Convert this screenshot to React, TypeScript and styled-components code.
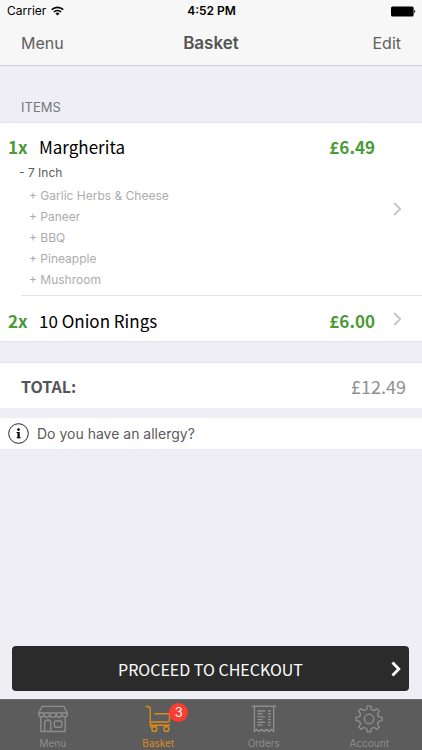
import React from "react";
import styled, { createGlobalStyle } from "styled-components";

const ui = `Inter, "Liberation Sans", sans-serif`;
const brand = `"Noto Sans CJK SC", "Noto Sans", sans-serif`;

const GlobalStyle = createGlobalStyle`
  *, *::before, *::after { box-sizing: border-box; }
  body { margin: 0; background: #efeef4; font-family: ${ui}; color: #000; }
  h1, h2, p, ul { margin: 0; padding: 0; }
  ul { list-style: none; }
  button { border: 0; padding: 0; background: none; font: inherit; color: inherit; text-align: left; cursor: pointer; }
  svg { display: block; flex: none; }
`;

const Screen = styled.div`
  display: flex;
  flex-direction: column;
  min-height: 100vh;
`;

const Header = styled.header`
  background: #f7f7f7;
  border-bottom: 1px solid #cfcfd3;
`;

const StatusBar = styled.div`
  display: grid;
  grid-template-columns: 1fr auto 1fr;
  align-items: center;
  height: 22px;
  padding: 0 6px 0 7px;
  font-size: 12px;
  line-height: 22px;
`;

const Carrier = styled.span`
  display: flex;
  align-items: center;
  gap: 5px;
`;

const Clock = styled.time`
  font-weight: 600;
`;

const BatterySlot = styled.span`
  justify-self: end;
`;

const NavBar = styled.nav`
  display: grid;
  grid-template-columns: 1fr auto 1fr;
  align-items: center;
  height: 43px;
  padding: 0 21px 2px;
  color: #606060;
`;

const NavButton = styled.button<{ $end?: boolean }>`
  justify-self: ${(p) => (p.$end ? "end" : "start")};
  font-size: 16px;
  line-height: 24px;
`;

const Title = styled.h1`
  font-size: 17px;
  font-weight: 600;
  line-height: 24px;
  color: #555;
`;

const SectionTitle = styled.h2`
  padding: 32px 21px 6px;
  font-size: 13px;
  font-weight: 400;
  line-height: 18px;
  color: #77777c;
`;

const Items = styled.ul`
  border-top: 1px solid #e4e4e8;
  border-bottom: 1px solid #e4e4e8;
  background: #fff;
`;

const Item = styled.li`
  & + &::before {
    content: "";
    display: block;
    height: 1px;
    margin-left: 21px;
    background: #e3e3e6;
  }
`;

const ItemButton = styled.button`
  display: flex;
  align-items: center;
  width: 100%;
  min-height: 45px;
  padding: 9px 20px 5px 8px;

  > svg { margin-bottom: 4px; }
`;

const ItemBody = styled.span`
  flex: 1;
  display: block;
`;

const ItemLine = styled.span`
  display: flex;
  align-items: center;
  font-family: ${brand};
  font-size: 17px;
  line-height: 29px;
`;

const Quantity = styled.span`
  width: 31px;
  font-weight: 700;
  color: #4a9a36;
`;

const Name = styled.span`
  flex: 1;
`;

const Price = styled.span`
  margin-right: 18px;
  font-weight: 700;
  color: #4a9a36;
`;

const Option = styled.span<{ $extra?: boolean }>`
  display: block;
  padding-left: ${(p) => (p.$extra ? 21 : 11)}px;
  font-size: 12px;
  line-height: ${(p) => (p.$extra ? 21 : 24)}px;
  color: ${(p) => (p.$extra ? "#acacac" : "#5c5c5c")};
`;

const TotalRow = styled.section`
  display: flex;
  align-items: center;
  justify-content: space-between;
  height: 46px;
  margin-top: 20px;
  padding: 0 16px 0 21px;
  border-top: 1px solid #e4e4e8;
  background: #fff;
  font-family: ${brand};
  line-height: 28px;
`;

const TotalLabel = styled.span`
  font-size: 16px;
  font-weight: 700;
  color: #555;
`;

const TotalValue = styled.span`
  font-size: 18px;
  color: #8e8e93;
`;

const AllergyButton = styled.button`
  display: flex;
  align-items: center;
  gap: 8px;
  height: 31px;
  margin-top: 10px;
  padding: 0 8px;
  background: #fff;
  font-size: 14px;
  line-height: 20px;
  color: #5a5a5a;
`;

const Footer = styled.footer`
  margin-top: auto;
`;

const CheckoutArea = styled.div`
  padding: 20px 13px 8px 12px;
`;

const Checkout = styled.button`
  display: grid;
  grid-template-columns: 1fr auto 1fr;
  align-items: center;
  width: 100%;
  height: 45px;
  padding: 0 8px;
  border-radius: 4px;
  background: #2b2b2b;
  color: #fff;
  font-family: ${brand};
  font-size: 16px;
  line-height: 28px;

  span { grid-column: 2; }
  svg { justify-self: end; }
`;

const TabBar = styled.nav`
  display: grid;
  grid-template-columns: repeat(4, 1fr);
  height: 51px;
  border-top: 1px solid #6c6c6c;
  background: #5c5c5c;
`;

const Tab = styled.button<{ $active?: boolean }>`
  display: flex;
  flex-direction: column;
  align-items: center;
  padding-top: 5px;
  font-size: 10px;
  line-height: 14px;
  color: ${(p) => (p.$active ? "#d98a1f" : "#8d8d8d")};
`;

const TabIcon = styled.span`
  position: relative;
  margin-bottom: 3px;
`;

const Badge = styled.span`
  position: absolute;
  top: -2px;
  right: -15px;
  width: 19px;
  height: 19px;
  border-radius: 50%;
  background: #fc3c31;
  color: #fff;
  font-size: 13px;
  line-height: 19px;
  text-align: center;
`;

const WifiIcon = () => (
  <svg width="13" height="10" viewBox="0 0 13 10" fill="none" stroke="#000" strokeWidth="1.7" aria-hidden="true">
    <path d="M.8 3.7a8.2 8.2 0 0 1 11.4 0" />
    <path d="M2.9 6a5.2 5.2 0 0 1 7.2 0" />
    <path d="M6.5 9.6 4.5 7.5a2.9 2.9 0 0 1 4 0Z" fill="#000" stroke="none" />
  </svg>
);

const BatteryIcon = () => (
  <svg width="25" height="11" viewBox="0 0 25 11" aria-hidden="true">
    <rect x="0" y=".5" width="22.6" height="10" rx="1.5" />
    <path d="M23.3 3.8c1.3.3 1.3 3.1 0 3.4Z" />
  </svg>
);

const Chevron = ({ bold }: { bold?: boolean }) =>
  bold ? (
    <svg width="10" height="16" viewBox="0 0 10 16" fill="none" stroke="#fff" strokeWidth="2.8" aria-hidden="true">
      <path d="m1.5 1.5 6.3 6.5-6.3 6.5" />
    </svg>
  ) : (
    <svg width="9" height="14" viewBox="0 0 9 14" fill="none" stroke="#c4c4c9" strokeWidth="1.8" aria-hidden="true">
      <path d="m1.2 1 6 6-6 6" />
    </svg>
  );

const InfoIcon = () => (
  <svg width="21" height="21" viewBox="0 0 21 21" aria-hidden="true">
    <circle cx="10.5" cy="10.5" r="9.8" fill="none" stroke="#222" strokeWidth="1" />
    <circle cx="10.5" cy="6.6" r="1.3" />
    <path d="M8.6 9h3.1v5.3h1v.9H8.6v-.9h.9V9.9h-.9Z" />
  </svg>
);

const lineProps = {
  width: 30,
  height: 28,
  viewBox: "0 0 30 28",
  fill: "none",
  stroke: "currentColor",
  strokeWidth: 1.4,
  strokeLinejoin: "round" as const,
  strokeLinecap: "round" as const,
  "aria-hidden": true,
};

const ShopIcon = () => (
  <svg {...lineProps}>
    <path d="M4.2 1.4h21.6L29.3 8v1.3a2.6 2.6 0 0 1-5.2 0 3 3 0 0 1-6 0 3 3 0 0 1-6.2 0 3 3 0 0 1-6 0 2.6 2.6 0 0 1-5.2 0V8Z" />
    <path d="M.8 8h28.4M2.8 12.3v14.2h24.4V12.3" />
    <path d="M6.6 26.3v-8.2a3.1 3.1 0 0 1 6.2 0v8.2" />
    <rect x="16.4" y="16" width="7.4" height="6.2" rx="1" />
  </svg>
);

const CartIcon = () => (
  <svg {...lineProps}>
    <path d="M3 1.5h1.5c2.3 0 2.8 1 2.8 3.2v15.5h19.4" />
    <path d="M7.5 17h17.3c1.2 0 1.7-.6 1.7-1.8V8.8H11.8M8.2 20.3v2.2" />
    <circle cx="11.4" cy="24" r="2.5" />
    <circle cx="23.4" cy="24" r="2.5" />
  </svg>
);

const ReceiptIcon = () => (
  <svg {...lineProps}>
    <path d="M3.3 1.3h23.5M5.4 1.6v25l2.5-2.3 2.4 2.3 2.4-2.3 2.4 2.3 2.4-2.3 2.4 2.3 2.4-2.3 2.4 2.3v-25" />
    <path d="M9 6h6.5M9 8.8h4M9 11.6h6.5M9 14.4h4M9 17.2h6.5M9 20h4M19.5 6h1.8M19.5 8.8h1.8M19.5 11.6h1.8M19.5 14.4h1.8M19.5 17.2h1.8M19.5 20h1.8" />
  </svg>
);

const gearPoint = (radius: number, degrees: number) => {
  const t = ((degrees - 90) * Math.PI) / 180;
  return `${(15 + radius * Math.cos(t)).toFixed(2)} ${(14 + radius * Math.sin(t)).toFixed(2)}`;
};

const gearPath =
  Array.from({ length: 8 }, (_, i) => {
    const a = i * 45;
    return (
      `${i ? "L" : "M"}${gearPoint(10.4, a - 12)}L${gearPoint(13, a - 8)}L${gearPoint(13, a + 8)}` +
      `L${gearPoint(10.4, a + 12)}Q${gearPoint(8.8, a + 22.5)} ${gearPoint(10.4, a + 33)}`
    );
  }).join("") + "Z";

const GearIcon = () => (
  <svg {...lineProps}>
    <path d={gearPath} />
    <circle cx="15" cy="14" r="4.7" />
  </svg>
);

const items = [
  {
    quantity: 1,
    name: "Margherita",
    price: "£6.49",
    size: "7 Inch",
    extras: ["Garlic Herbs & Cheese", "Paneer", "BBQ", "Pineapple", "Mushroom"],
  },
  { quantity: 2, name: "10 Onion Rings", price: "£6.00", extras: [] },
];

const tabs = [
  { label: "Menu", Icon: ShopIcon },
  { label: "Basket", Icon: CartIcon, active: true, badge: 3 },
  { label: "Orders", Icon: ReceiptIcon },
  { label: "Account", Icon: GearIcon },
];

export default function App() {
  return (
    <>
      <GlobalStyle />
      <Screen>
        <Header>
          <StatusBar>
            <Carrier>
              Carrier <WifiIcon />
            </Carrier>
            <Clock>4:52 PM</Clock>
            <BatterySlot>
              <BatteryIcon />
            </BatterySlot>
          </StatusBar>
          <NavBar>
            <NavButton>Menu</NavButton>
            <Title>Basket</Title>
            <NavButton $end>Edit</NavButton>
          </NavBar>
        </Header>

        <SectionTitle>ITEMS</SectionTitle>
        <Items>
          {items.map((item) => (
            <Item key={item.name}>
              <ItemButton>
                <ItemBody>
                  <ItemLine>
                    <Quantity>{item.quantity}x</Quantity>
                    <Name>{item.name}</Name>
                    <Price>{item.price}</Price>
                  </ItemLine>
                  {item.size && <Option>- {item.size}</Option>}
                  {item.extras.map((extra) => (
                    <Option key={extra} $extra>
                      + {extra}
                    </Option>
                  ))}
                </ItemBody>
                <Chevron />
              </ItemButton>
            </Item>
          ))}
        </Items>

        <TotalRow>
          <TotalLabel>TOTAL:</TotalLabel>
          <TotalValue>£12.49</TotalValue>
        </TotalRow>

        <AllergyButton>
          <InfoIcon />
          Do you have an allergy?
        </AllergyButton>

        <Footer>
          <CheckoutArea>
            <Checkout>
              <span>PROCEED TO CHECKOUT</span>
              <Chevron bold />
            </Checkout>
          </CheckoutArea>
          <TabBar>
            {tabs.map(({ label, Icon, active, badge }) => (
              <Tab key={label} $active={active} aria-current={active ? "page" : undefined}>
                <TabIcon>
                  <Icon />
                  {badge && <Badge>{badge}</Badge>}
                </TabIcon>
                {label}
              </Tab>
            ))}
          </TabBar>
        </Footer>
      </Screen>
    </>
  );
}
